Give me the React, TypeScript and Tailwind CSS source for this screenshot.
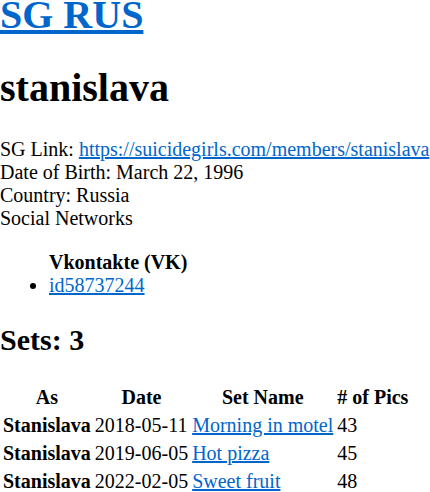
const sets = [
  { as: "Stanislava", date: "2018-05-11", name: "Morning in motel", pics: 43 },
  { as: "Stanislava", date: "2019-06-05", name: "Hot pizza", pics: 45 },
  { as: "Stanislava", date: "2022-02-05", name: "Sweet fruit", pics: 48 },
];

const link = "text-[#0066cc] underline";

export default function App() {
  return (
    <div className="font-['Liberation_Serif',serif] text-[20px] leading-[23px] text-black bg-white min-h-screen">
      <h1 className="text-[40px] leading-[46px] font-bold mt-[-8px] mb-[27px]">
        <a href="#" className={link}>SG RUS</a>
      </h1>
      <h1 className="text-[40px] leading-[46px] font-bold mb-[27px]">stanislava</h1>

      <div className="mt-5">
        SG Link:{" "}
        <a href="#" className={link}>https://suicidegirls.com/members/stanislava</a>
      </div>
      <div>Date of Birth: March 22, 1996</div>
      <div>Country: Russia</div>
      <div>Social Networks</div>

      <ul className="mt-[21px] mb-5 pl-[49px]">
        <li className="list-none font-bold">Vkontakte (VK)</li>
        <li className="list-disc">
          <a href="#" className={link}>id58737244</a>
        </li>
      </ul>

      <h2 className="text-[30px] leading-[35px] font-bold my-[25px]">Sets: 3</h2>

      <table className="border-separate border-spacing-[2px]">
        <thead>
          <tr>
            <th className="px-px py-[1.5px] text-center font-bold">As</th>
            <th className="px-px py-[1.5px] text-center font-bold">Date</th>
            <th className="px-px py-[1.5px] text-center font-bold">Set Name</th>
            <th className="px-px py-[1.5px] text-center font-bold"># of Pics</th>
          </tr>
        </thead>
        <tbody>
          {sets.map((s) => (
            <tr key={s.date}>
              <td className="px-px py-[1.5px] font-bold">{s.as}</td>
              <td className="px-px py-[1.5px]">{s.date}</td>
              <td className="px-px py-[1.5px]">
                <a href="#" className={link}>{s.name}</a>
              </td>
              <td className="px-px py-[1.5px]">{s.pics}</td>
            </tr>
          ))}
        </tbody>
      </table>
    </div>
  );
}
